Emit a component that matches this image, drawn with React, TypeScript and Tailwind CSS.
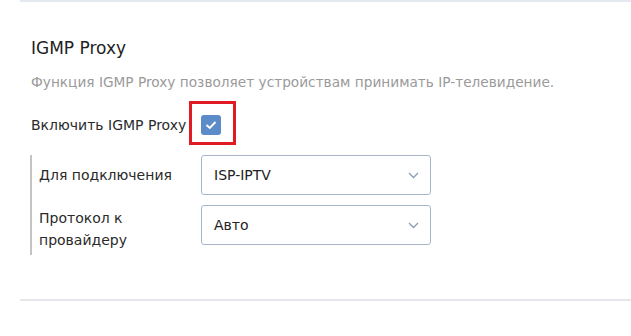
import React from "react";

function Chevron() {
  return (
    <svg width="11" height="7" viewBox="0 0 11 7" className="shrink-0">
      <path d="M1 1 L5.5 5.5 L10 1" fill="none" stroke="#8a9bb3" strokeWidth="1.3" />
    </svg>
  );
}

function Select({ value }: { value: string }) {
  return (
    <div className="w-[230px] h-[40px] border border-[#a6b7cc] rounded-[3px] flex items-center justify-between pl-[12px] pr-[11px] text-[14px] text-[#222]">
      <span>{value}</span>
      <Chevron />
    </div>
  );
}

export default function App() {
  return (
    <div className="w-[631px] h-[336px] bg-white overflow-hidden font-['DejaVu_Sans',sans-serif]">
      <div className="ml-[20px] border-t-2 border-[#e4e9ef] h-[299px] pl-[10px]">
        <div className="pt-[36px] h-[56px] text-[17px] leading-[20px] text-[#222] pl-[1px]">IGMP Proxy</div>
        <div className="mt-[15px] text-[13.7px] leading-[18px] text-[#9a9a9a] pl-[1px]">
          Функция IGMP Proxy позволяет устройствам принимать IP-телевидение.
        </div>
        <div className="mt-[24px] flex items-center h-[20px]">
          <div className="w-[171px] pl-[1px] text-[14px] text-[#2a2a2a]">Включить IGMP Proxy</div>
          <div className="relative">
            <div className="w-[20px] h-[20px] rounded-[3px] bg-[#5b8bc9] flex items-center justify-center">
              <svg width="14" height="12" viewBox="0 0 14 12">
                <path d="M2.5 6 L5.8 9 L11.5 3" fill="none" stroke="#fff" strokeWidth="1.9" />
              </svg>
            </div>
            <div className="absolute left-[-12px] top-[-14px] w-[47px] h-[44px] border-[3px] border-[#e01b24]" />
          </div>
        </div>
        <div className="mt-[20px] border-l-2 border-[#c4c4c4] pl-[7px] pb-[10px] flex flex-col gap-[10px]">
          <div className="flex items-center h-[40px]">
            <div className="w-[162px] text-[14px] text-[#2a2a2a]">Для подключения</div>
            <Select value="ISP-IPTV" />
          </div>
          <div className="flex items-center h-[40px]">
            <div className="w-[162px] text-[14px] leading-[22px] text-[#2a2a2a] pt-[8px]">Протокол к<br />провайдеру</div>
            <Select value="Авто" />
          </div>
        </div>
      </div>
      <div className="ml-[20px] border-t-2 border-[#e4e6ea]" />
    </div>
  );
}
